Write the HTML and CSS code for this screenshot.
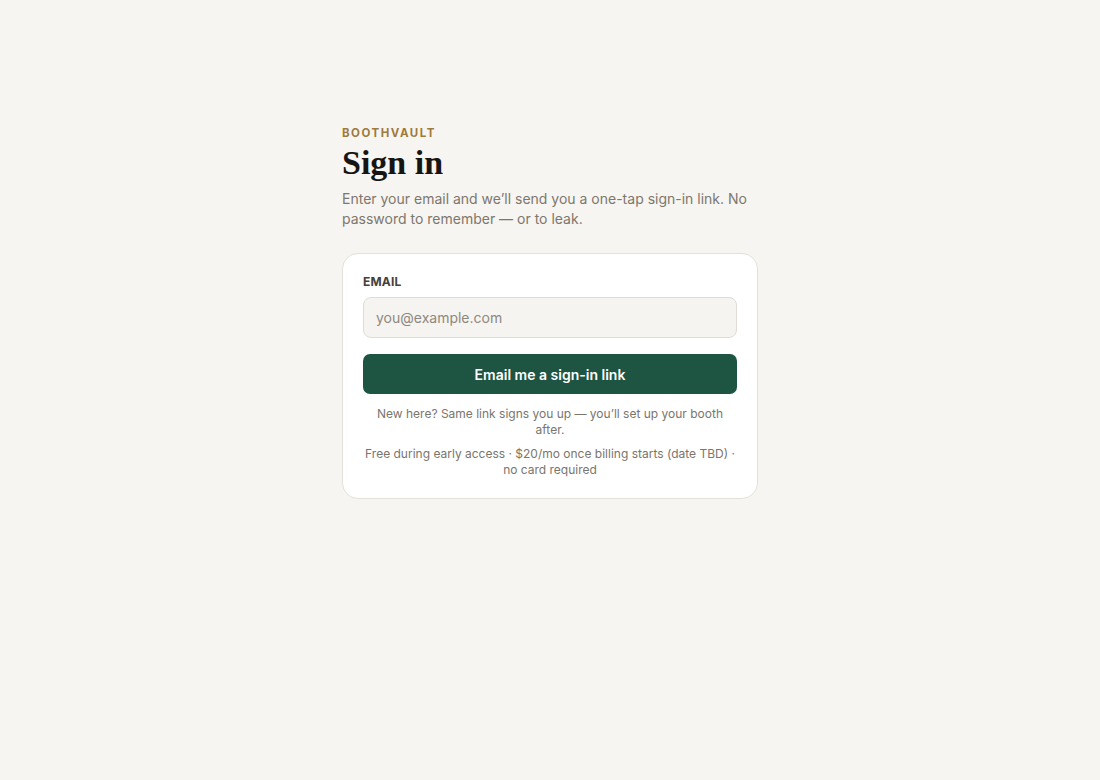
FILE: index.html
```html
<!DOCTYPE html>
<html lang="en">
<head>
<meta charset="utf-8">
<title>Sign in · Boothvault</title>
<link rel="stylesheet" href="styles.css">
</head>
<body>
<main class="page">
  <div class="auth">
    <div class="brand">BOOTHVAULT</div>
    <h1 class="title">Sign in</h1>
    <p class="lead">Enter your email and we’ll send you a one-tap sign-in link. No password to remember — or to leak.</p>
    <form class="card">
      <label class="label" for="email">EMAIL</label>
      <input class="input" id="email" type="email" placeholder="you@example.com">
      <button class="btn" type="button">Email me a sign-in link</button>
      <p class="note">New here? Same link signs you up — you’ll set up your booth after.</p>
      <p class="note">Free during early access · $20/mo once billing starts (date TBD) · no card required</p>
    </form>
  </div>
</main>
</body>
</html>
```
FILE: styles.css
```css
* { box-sizing: border-box; }
html, body { margin: 0; padding: 0; }
body {
  background: #f7f5f1;
  font-family: Inter, "Noto Sans", sans-serif;
  color: #1a1a1a;
  min-height: 780px;
}
.page {
  display: flex;
  justify-content: center;
  padding-top: 126px;
}
.auth {
  width: 416px;
  display: flex;
  flex-direction: column;
}
.brand {
  font-size: 11.5px;
  font-weight: 700;
  letter-spacing: 1.5px;
  color: #9e7a3c;
  line-height: 14px;
}
.title {
  margin: 3px 0 0;
  font-family: "Liberation Serif", "DejaVu Serif", serif;
  font-weight: 700;
  font-size: 34px;
  line-height: 40px;
  color: #161513;
}
.lead {
  margin: 6px 0 0;
  font-size: 14px;
  line-height: 20px;
  color: #7d776d;
}
.card {
  margin-top: 24px;
  background: #ffffff;
  border: 1px solid #e4e0d9;
  border-radius: 16px;
  padding: 19px 20px 20px;
  display: flex;
  flex-direction: column;
}
.label {
  font-size: 12px;
  font-weight: 700;
  color: #45403a;
  line-height: 18px;
  letter-spacing: 0.2px;
}
.input {
  margin-top: 6px;
  height: 41px;
  border: 1px solid #e0dcd5;
  border-radius: 8px;
  background: #f6f4f0;
  padding: 0 12px;
  font-family: inherit;
  font-size: 14px;
  color: #1a1a1a;
  outline: none;
}
.input::placeholder { color: #8d887f; }
.btn {
  margin-top: 16px;
  height: 40px;
  border: none;
  border-radius: 7px;
  background: #1d5442;
  color: #ffffff;
  font-family: inherit;
  font-size: 14px;
  font-weight: 600;
  cursor: pointer;
}
.note {
  margin: 12px 0 0;
  font-size: 12px;
  line-height: 16px;
  text-align: center;
  color: #7a756d;
  padding: 0 2px;
}
.note + .note { margin-top: 8px; }
```
